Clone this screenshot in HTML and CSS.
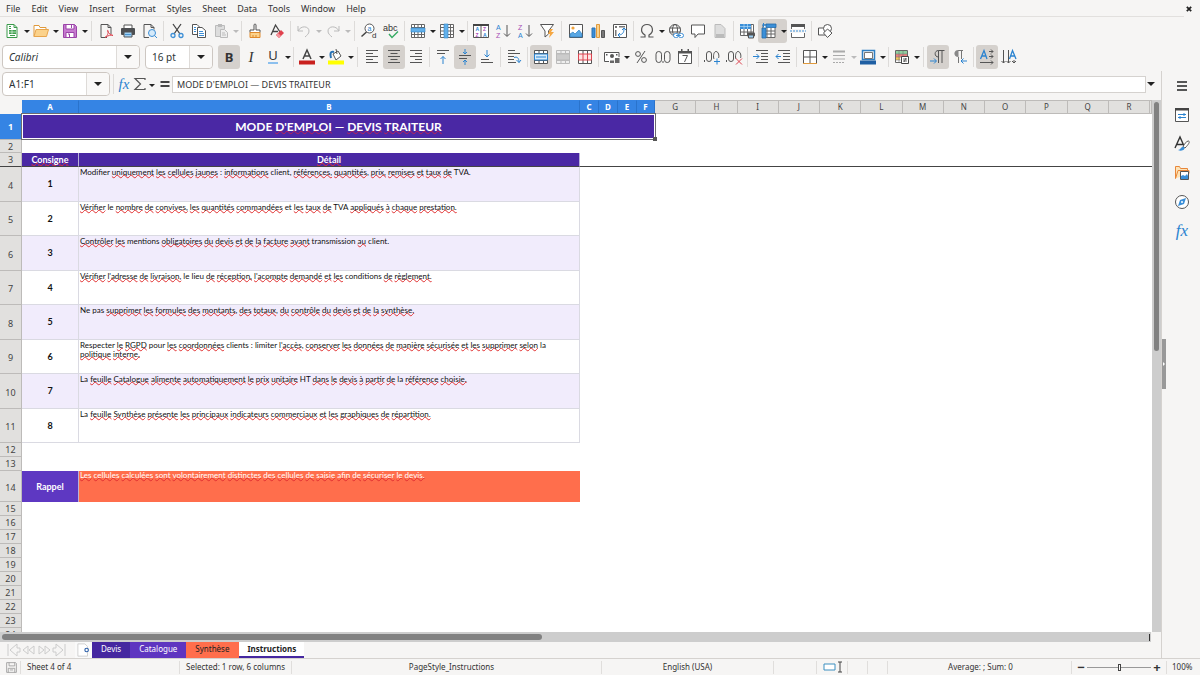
FILE: index.html
```html
<!DOCTYPE html>
<html lang="fr">
<head>
<meta charset="utf-8">
<title>Devis traiteur</title>
<link rel="stylesheet" href="styles.css">
</head>
<body>
<nav class="menu">
<button>File</button><button>Edit</button><button>View</button><button>Insert</button><button>Format</button><button>Styles</button><button>Sheet</button><button>Data</button><button>Tools</button><button>Window</button><button>Help</button>
<button class="close" aria-label="Close"><svg viewBox="0 0 16 16"><path d="M5.500 5.500l5 5m0-5l-5 5" stroke="#222" stroke-width="2"/></svg></button>
</nav>

<div class="bar">
<button class="tb" aria-label="New"><svg viewBox="0 0 16 16"><path d="M3 1.500h7l3 3v10H3z" fill="#fff" stroke="#3a9a4a"/><path d="M10 1.500v3h3M5 5.500h2M5 3.500h2" stroke="#3a9a4a" fill="none"/><path d="M5 7h7v4H5z" fill="#3fa14e"/><path d="M5 9h7M8 7v4" stroke="#fff" stroke-width=".6"/><path d="M6 12.500h5" stroke="#3a9a4a"/></svg></button><button class="arr" aria-label="New options"></button>
<button class="tb" aria-label="Open"><svg viewBox="0 0 16 16"><path d="M1 13.500V2.500h5l1 2h6v2.500" fill="#fff" stroke="#e09a3c"/><path d="M1 13.500L3 6.500h12.500l-2 7z" fill="#fbd28b" stroke="#e8a54c"/></svg></button><button class="arr" aria-label="Open options"></button>
<button class="tb" aria-label="Save"><svg viewBox="0 0 16 16"><path d="M1.500 1.500h11l2 2v11h-13z" fill="#c77bd0" stroke="#9b45a8"/><path d="M4 1.500h8v4.500H4zM4 9.500h8v5H4z" fill="#fff" stroke="#9b45a8"/><path d="M9.500 2v3M6 11h1.500v3" stroke="#9b45a8" fill="none"/></svg></button><button class="arr" aria-label="Save options"></button>
<i class="sep wide"></i>
<button class="tb" aria-label="Export PDF"><svg viewBox="0 0 16 16"><path d="M3 1.500h7l3 3V11M9 14.500H3v-13" fill="none" stroke="#555"/><path d="M10 1.500v3h3" fill="none" stroke="#555"/><path d="M7 14.500c2-1 4-5 3-7-1-1-1 3 5 5-2-1-5 0-8 2z" fill="none" stroke="#dd4450"/></svg></button>
<button class="tb" aria-label="Print"><svg viewBox="0 0 16 16"><path d="M4 5V2h8v3" fill="#fff" stroke="#555"/><rect x="1" y="5" width="14" height="7" rx="1" fill="#4d4f52"/><path d="M4 9h8v5H4z" fill="#9ed0f5" stroke="#555"/><path d="M5 11.500h6" stroke="#4a94d0"/></svg></button>
<button class="tb" aria-label="Print preview"><svg viewBox="0 0 16 16"><path d="M2 1.500h7l3 3v2M2 1.500v13h5" fill="none" stroke="#555"/><path d="M9 1.500v3h3" fill="none" stroke="#555"/><circle cx="10" cy="10" r="3.500" fill="#d5eafa" stroke="#3d8fd6"/><path d="M12.500 12.500l2.500 2.500" stroke="#3d8fd6"/></svg></button>
<i class="sep"></i>
<button class="tb" aria-label="Cut"><svg viewBox="0 0 16 16"><path d="M4 1l7 10M12 1L5 11" stroke="#444" stroke-width="1.300"/><circle cx="4" cy="12.500" r="2" fill="none" stroke="#3d8fd6" stroke-width="1.300"/><circle cx="12" cy="12.500" r="2" fill="none" stroke="#3d8fd6" stroke-width="1.300"/></svg></button>
<button class="tb" aria-label="Copy"><svg viewBox="0 0 16 16"><path d="M6 11.500H1.500v-10H6l3 3" fill="#fff" stroke="#555"/><path d="M6.500 4.500H11l3.500 3v7h-8z" fill="#fff" stroke="#555"/><path d="M3 4.500h2M3 6.500h2M3 8.500h2M8 8.500h4M8 10.500h5M8 12.500h5" stroke="#3d8fd6"/></svg></button>
<button class="tb" aria-label="Paste" disabled><svg viewBox="0 0 16 16"><path d="M7 13.500H2.500v-11h9V6" fill="#ddd" stroke="#bbb"/><path d="M5 1h4v3H5z" fill="#bbb"/><path d="M7.500 6.500h4l3 3v5h-7z" fill="#eee" stroke="#bbb"/><path d="M9 10h3M9 12h4" stroke="#bbb"/></svg></button><button class="arr off" aria-label="Paste options" disabled></button>
<i class="sep"></i>
<button class="tb" aria-label="Clone formatting"><svg viewBox="0 0 16 16"><path d="M7 7V2c0-1.300 2-1.300 2 0v5h4v2.500H3V7z" fill="#fff" stroke="#555"/><path d="M3 9.500v5h10v-5z" fill="#fbd28b" stroke="#e08a2c"/><path d="M6 14v-2M9 14v-2" stroke="#e08a2c"/></svg></button>
<button class="tb" aria-label="Clear formatting"><svg viewBox="0 0 16 16"><path d="M2 12L6.500 2 11 9M3.500 8.500H9" fill="none" stroke="#444" stroke-width="1.300"/><path d="M7 12l5-5 3 3-5 5z" fill="#e0414d"/><path d="M7 12l2-2 3 3-2 2z" fill="#f3949b"/></svg></button>
<i class="sep"></i>
<button class="tb" aria-label="Undo" disabled><svg viewBox="0 0 16 16"><path d="M2 3v5h5M2 8c3-6 11-5 11 0 0 3-2 4-4 6" fill="none" stroke="#bbb"/></svg></button><button class="arr off" aria-label="Undo history" disabled></button>
<button class="tb" aria-label="Redo" disabled><svg viewBox="0 0 16 16"><path d="M14 3v5H9M14 8C11 2 3 3 3 8c0 3 2 4 4 6" fill="none" stroke="#bbb"/></svg></button><button class="arr off" aria-label="Redo history" disabled></button>
<i class="sep wide"></i>
<button class="tb" aria-label="Find and replace"><svg viewBox="0 0 16 16"><circle cx="8.500" cy="5.500" r="4.500" fill="#fff" stroke="#555"/><path d="M5.500 9l-5 4.500" stroke="#444" stroke-width="1.500"/><text class="ic" x="6.500" y="8" font-size="7" fill="#2a83d0">a</text><text class="ic" x="11" y="15" font-size="8" fill="#333">d</text></svg></button>
<button class="tb" aria-label="Spelling"><svg viewBox="0 0 16 16"><text class="ic" x="0" y="8" font-size="9" fill="#333">abc</text><path d="M6 11l3 3.500 6-6" fill="none" stroke="#35ab63" stroke-width="1.400"/></svg></button>
<i class="sep"></i>
<button class="tb" aria-label="Row"><svg viewBox="0 0 16 16"><path d="M1.500 1.500h13v13h-13zM1.500 4.500h13M1.500 11.500h13M4.500 1.500v13M8 1.500v13M11.500 1.500v13" fill="#fff" stroke="#666"/><path d="M1 5h14v4H1z" fill="#62b0ea" stroke="#3183c8" stroke-width=".6"/></svg></button><button class="arr" aria-label="Row options"></button>
<button class="tb" aria-label="Column"><svg viewBox="0 0 16 16"><path d="M1.500 1.500h13v13h-13zM1.500 4.500h13M1.500 8h13M1.500 11.500h13M11.500 1.500v13" fill="#fff" stroke="#666"/><path d="M5 1h4v14H5z" fill="#62b0ea" stroke="#3183c8" stroke-width=".6"/></svg></button><button class="arr" aria-label="Column options"></button>
<i class="sep"></i>
<button class="tb" aria-label="Sort"><svg viewBox="0 0 16 16"><path d="M.5 1.500h15v13H.5zM8 3v12" fill="#fff" stroke="#555"/><path d="M0 1h16v2H0z" fill="#444"/><g class="ic" font-size="5" font-weight="700"><text x="2.500" y="8" fill="#2a83d0">A</text><text x="2.500" y="14" fill="#a64bb5">Z</text><text x="10" y="8" fill="#a64bb5">Z</text><text x="10" y="14" fill="#2a83d0">A</text></g></svg></button>
<button class="tb" aria-label="Sort ascending"><svg viewBox="0 0 16 16"><g class="ic" font-size="7"><text x="1" y="7" fill="#2a83d0">A</text><text x="1" y="15" fill="#a64bb5">Z</text></g><path d="M12 2v11M9 10.500l3 3 3-3" fill="none" stroke="#555"/></svg></button>
<button class="tb" aria-label="Sort descending"><svg viewBox="0 0 16 16"><g class="ic" font-size="7"><text x="1" y="7" fill="#a64bb5">Z</text><text x="1" y="15" fill="#2a83d0">A</text></g><path d="M12 2v11M9 10.500l3 3 3-3" fill="none" stroke="#555"/></svg></button>
<button class="tb" aria-label="AutoFilter"><svg viewBox="0 0 16 16"><path d="M1.500 1.500h13L9.500 8v3L6 14V8z" fill="#fff" stroke="#555"/><path d="M11 6l-2 5h2l-1 4 5-6h-3l2-3z" fill="#f5a742"/></svg></button>
<i class="sep wide"></i>
<button class="tb" aria-label="Image"><svg viewBox="0 0 16 16"><path d="M1.500 1.500h13v13h-13z" fill="#fff" stroke="#555"/><circle cx="5" cy="5" r="1.600" fill="#f0a33c"/><path d="M2 14v-3l3-2 2 2 4-4 3 4v3z" fill="#58a7e4" stroke="#2f7fc2" stroke-width=".7"/></svg></button>
<button class="tb" aria-label="Chart"><svg viewBox="0 0 16 16"><path d="M2 5h3v9.500H2z" fill="#3b8fd8" stroke="#2a73b5"/><path d="M6.500 1.500h3v13h-3z" fill="#fbd28b" stroke="#e09a3c"/><path d="M11.500 7.500h3v7h-3z" fill="#777" stroke="#555"/></svg></button>
<button class="tb" aria-label="Pivot table"><svg viewBox="0 0 16 16"><path d="M1.500 1.500h13v13h-13z" fill="#fff" stroke="#555"/><path d="M3 3h2v2H3zM7 3h6v1.500H7zM3 7h1.500v6H3z" fill="#777"/><path d="M6 12c4 0 6-2 6-6M10 7l2-2 2 2M8 10l-2 2 2 2" fill="none" stroke="#2a83d0"/></svg></button>
<i class="sep"></i>
<button class="tb" aria-label="Special character"><svg viewBox="0 0 16 16"><path d="M1.500 14H6v-2C.5 9 2 1.500 8 1.500S15.500 9 10 12v2h4.500" fill="none" stroke="#555" stroke-width="1.200"/></svg></button><button class="arr" aria-label="Special character options"></button>
<button class="tb" aria-label="Hyperlink"><svg viewBox="0 0 16 16"><circle cx="7" cy="7" r="5.500" fill="#fff" stroke="#555"/><ellipse cx="7" cy="7" rx="2.500" ry="5.500" fill="none" stroke="#555"/><path d="M1.500 5h11M1.500 9h11" stroke="#555"/><rect x="5.500" y="10.500" width="5" height="4" rx="2" fill="#fff" stroke="#3d8fd6"/><rect x="10.500" y="10.500" width="5" height="4" rx="2" fill="#fff" stroke="#3d8fd6"/><path d="M8 12.500h5" stroke="#3d8fd6"/></svg></button>
<button class="tb" aria-label="Comment"><svg viewBox="0 0 16 16"><path d="M1.500 2h13v9H8l-3 3.500V11H1.500z" fill="#fff" stroke="#555"/></svg></button>
<button class="tb" aria-label="Headers and footers" disabled><svg viewBox="0 0 16 16"><path d="M3 1.500h6l4 4v9H3z" fill="#ddd" stroke="#bbb"/><path d="M4 11h8v3H4z" fill="#bbb"/></svg></button>
<i class="sep"></i>
<button class="tb" aria-label="Print area"><svg viewBox="0 0 16 16"><path d="M1.500 1.500h13v11h-13zM1.500 9h13M5 1.500v11M8.500 1.500v11M12 1.500v11" fill="#fff" stroke="#666"/><path d="M1 1h11v5H1z" fill="#3b8fd8"/><path d="M1 3.500h11M5 1v5M8.500 1v5" stroke="#bfe0fa" stroke-width=".6"/><rect x="8" y="9.500" width="8" height="4" rx="1" fill="#555"/><path d="M9.500 12h5v3h-5z" fill="#9ed0f5" stroke="#555"/></svg></button>
<span class="split on"><button class="tb" aria-label="Freeze"><svg viewBox="0 0 16 16"><path d="M2 2h12v12.500H2zM6 5v10M10 5v10M2 8h12M2 11h12" fill="#fff" stroke="#666"/><path d="M5 1h10v3.500H5zM1 5h4v10H1z" fill="#3b8fd8" stroke="#2369a8" stroke-width=".8"/><path d="M2.500 0v4M1 2h4" stroke="#2a83d0"/></svg></button><button class="arr" aria-label="Freeze options"></button></span>
<button class="tb" aria-label="Split window"><svg viewBox="0 0 16 16"><path d="M1.500 6V1.500h13V6M1.500 10v4.500h13V10" fill="#fff" stroke="#666"/><path d="M1 1h14v3H1z" fill="#555"/><path d="M0 8h16" stroke="#3d8fd6" stroke-dasharray="2 1"/></svg></button>
<i class="sep"></i>
<button class="tb" aria-label="Draw functions"><svg viewBox="0 0 16 16"><path d="M1.500 5h7v7h-7z" fill="#fff" stroke="#555"/><circle cx="10.500" cy="5.500" r="4" fill="#fff" stroke="#555"/><path d="M10.500 6l4.500 4-4.500 4.500L6.500 10z" fill="#fff" stroke="#555"/></svg></button>
</div>

<div class="bar second">
<div class="combo font"><input type="text" value="Calibri" aria-label="Font name"><button aria-label="Font list"></button></div>
<div class="combo size"><input type="text" value="16 pt" aria-label="Font size"><button aria-label="Size list"></button></div>
<button class="tb on glyph b" aria-label="Bold">B</button>
<button class="tb glyph it" aria-label="Italic">I</button>
<button class="tb glyph un" aria-label="Underline"><span>U</span></button><button class="arr" aria-label="Underline options"></button>
<i class="sep"></i>
<button class="tb" aria-label="Font colour"><svg viewBox="0 0 16 16"><path d="M4 10L8 1l4 9M5.500 7h5" fill="none" stroke="#444" stroke-width="1.500"/><path d="M0 11.500h16v4H0z" fill="#c9211e"/></svg></button><button class="arr" aria-label="Font colours"></button>
<button class="tb" aria-label="Highlight colour"><svg viewBox="0 0 16 16"><path d="M5 5l5-3 3 5-5 4z" fill="#fff" stroke="#555"/><path d="M8 0l1 5" stroke="#555"/><path d="M6 3C2 2 2 5 3 9" fill="none" stroke="#2a73b5" stroke-width="2"/><path d="M0 11.500h16v4H0z" fill="#ffff00"/></svg></button><button class="arr" aria-label="Highlight colours"></button>
<i class="sep wide"></i>
<button class="tb" aria-label="Align left"><svg viewBox="0 0 16 16"><path d="M2 1.500h12M2 4.500h7M2 7.500h12M2 10.500h7M2 13.500h12" stroke="#555"/></svg></button>
<button class="tb on" aria-label="Align centre"><svg viewBox="0 0 16 16"><path d="M2 1.500h12M4.500 4.500h7M2 7.500h12M4.500 10.500h7M2 13.500h12" stroke="#555"/></svg></button>
<button class="tb" aria-label="Align right"><svg viewBox="0 0 16 16"><path d="M2 1.500h12M7 4.500h7M2 7.500h12M7 10.500h7M2 13.500h12" stroke="#555"/></svg></button>
<i class="sep"></i>
<button class="tb" aria-label="Align top"><svg viewBox="0 0 16 16"><path d="M2 1.500h12M2 4.500h8" stroke="#555"/><path d="M8 15V7.500M5.500 10L8 7.500l2.500 2.500" fill="none" stroke="#2a83d0"/></svg></button>
<button class="tb on" aria-label="Centre vertically"><svg viewBox="0 0 16 16"><path d="M2 6.500h12M2 9.500h8" stroke="#555"/><path d="M8 0v5M6 3l2 2 2-2M8 16v-5M6 13l2-2 2 2" fill="none" stroke="#2a83d0"/></svg></button>
<button class="tb" aria-label="Align bottom"><svg viewBox="0 0 16 16"><path d="M2 10.500h8M2 13.500h12" stroke="#555"/><path d="M8 1v7M5.500 5.500L8 8l2.500-2.500" fill="none" stroke="#2a83d0"/></svg></button>
<i class="sep"></i>
<button class="tb" aria-label="Wrap text"><svg viewBox="0 0 16 16"><path d="M2 1.500h7M2 4.500h12M2 7.500h6M2 10.500h6M2 13.500h8" stroke="#555"/><path d="M8 8.500c3-1 5 0 5 5M10.500 11l2.500 2.500 2-2.500" fill="none" stroke="#2a83d0"/></svg></button>
<i class="sep"></i>
<button class="tb on" aria-label="Merge and centre"><svg viewBox="0 0 16 16"><path d="M1.500 1.500h13v13h-13zM6 1.500v13M10.500 1.500v13M1.500 4.500h13M1.500 11.500h13" fill="#fff" stroke="#555"/><path d="M1.500 5h13v6h-13z" fill="#d6ebfb" stroke="#2a83d0"/><path d="M3 8h10" stroke="#2a83d0"/></svg></button>
<button class="tb" aria-label="Merge cells" disabled><svg viewBox="0 0 16 16"><path d="M1.500 1.500h13v13h-13zM6 1.500v13M10.500 1.500v13M1.500 4.500h13M1.500 11.500h13" fill="#eee" stroke="#bbb"/><path d="M1.500 5h13v6h-13z" fill="#ccc" stroke="#bbb"/></svg></button>
<button class="tb" aria-label="Unmerge cells"><svg viewBox="0 0 16 16"><path d="M1.500 1.500h13v13h-13zM6 1.500v13M10.500 1.500v13" fill="#fff" stroke="#555"/><path d="M1.500 5h13v6h-13zM6 5v6M10.500 5v6" fill="#fde3e3" stroke="#dd4450"/></svg></button>
<i class="sep"></i>
<button class="tb" aria-label="Currency"><svg viewBox="0 0 16 16"><path d="M15 8V3.500H.5v9H5" fill="#fff" stroke="#555"/><circle cx="8" cy="7" r="2" fill="#555"/><path d="M2 5h1.500v1.500H2zM12 5h1.500v1.500H12z" fill="#555"/><path d="M6 11.500h4v2.500H6zM11 9h4.500v5H11z" fill="#666"/></svg></button><button class="arr" aria-label="Currency options"></button>
<button class="tb" aria-label="Percent"><svg viewBox="0 0 16 16"><circle cx="5" cy="5" r="2.400" fill="none" stroke="#555"/><circle cx="11" cy="11" r="2.400" fill="none" stroke="#555"/><path d="M12 2L4 14" stroke="#555"/></svg></button>
<button class="tb" aria-label="Number"><svg viewBox="0 0 16 16"><rect x="1" y="2.500" width="5.500" height="11" rx="2.700" fill="none" stroke="#555"/><rect x="9.500" y="2.500" width="5.500" height="11" rx="2.700" fill="none" stroke="#555"/><path d="M8 12v2" stroke="#555"/></svg></button>
<button class="tb" aria-label="Date"><svg viewBox="0 0 16 16"><path d="M1.500 2.500h13v12h-13z" fill="#fff" stroke="#555"/><path d="M1 2h14v2.500H1zM4 0h1.500v3H4zM10.500 0H12v3h-1.500z" fill="#555"/><path d="M5.500 6.500h5l-3 6.500" fill="none" stroke="#555"/></svg></button>
<i class="sep"></i>
<button class="tb" aria-label="Add decimal place"><svg viewBox="0 0 16 16"><rect x="2.500" y="2.500" width="5" height="10" rx="2.500" fill="none" stroke="#555"/><path d="M10 10c-1-2-.5-7.500 2-7.500S15.500 7 14.500 9M.5 11v2" fill="none" stroke="#555"/><path d="M13 9.500v6M10 12.500h6" stroke="#2a83d0"/></svg></button>
<button class="tb" aria-label="Delete decimal place"><svg viewBox="0 0 16 16"><rect x="2.500" y="2.500" width="5" height="10" rx="2.500" fill="none" stroke="#555"/><path d="M10 10c-1-2-.5-7.500 2-7.500S15.500 7 14.500 9M.5 11v2" fill="none" stroke="#555"/><path d="M10 9.500l6 6M16 9.500l-6 6" stroke="#dd4450"/></svg></button>
<i class="sep"></i>
<button class="tb" aria-label="Increase indent"><svg viewBox="0 0 16 16"><path d="M3 1.500h12M8 4.500h7M8 7.500h7M8 10.500h7M3 13.500h12" stroke="#555"/><path d="M0 7.500h6M3.500 5L6 7.500 3.500 10" fill="none" stroke="#2a83d0"/></svg></button>
<button class="tb" aria-label="Decrease indent"><svg viewBox="0 0 16 16"><path d="M3 1.500h12M8 4.500h7M8 7.500h7M8 10.500h7M3 13.500h12" stroke="#555"/><path d="M6 7.500H1M3.500 5L1 7.500 3.500 10" fill="none" stroke="#2a83d0"/></svg></button>
<i class="sep"></i>
<button class="tb" aria-label="Borders"><svg viewBox="0 0 16 16"><path d="M1.500 1.500h13v13h-13z" fill="#fff" stroke="#555"/><path d="M8 2v12M2 8h12" stroke="#555"/><path d="M1 14.500h14" stroke="#e09a3c"/></svg></button><button class="arr" aria-label="Border options"></button>
<button class="tb" aria-label="Border style" disabled><svg viewBox="0 0 16 16"><path d="M2 2.500h12" stroke="#aaa" stroke-width="2"/><path d="M2 6.500h12M2 10h12" stroke="#aaa"/><path d="M2 13.500h12" stroke="#aaa" stroke-dasharray="2 1"/></svg></button><button class="arr off" aria-label="Border styles" disabled></button>
<button class="tb" aria-label="Border colour"><svg viewBox="0 0 16 16"><path d="M2.500 1.500h12v9h-12z" fill="#f6f5f4" stroke="#2f7fc2" stroke-width="1.500"/><path d="M4.500 3.500h8v6h-8z" fill="#fff" stroke="#777"/><path d="M0 11.500h16v4H0z" fill="#1f5fa3"/></svg></button><button class="arr" aria-label="Border colours"></button>
<i class="sep"></i>
<button class="tb" aria-label="Conditional formatting"><svg viewBox="0 0 16 16"><path d="M1.500 1.500h12v12h-12z" fill="#fff" stroke="#666"/><path d="M2 2h11v3H2z" fill="#8fd19e"/><path d="M2 5h11v3H2z" fill="#ee7f7f"/><path d="M2 8h4v3H2z" fill="#f6c95c"/><path d="M1.500 5h12M1.500 8h12M1.500 11h5M5 2v11M9 2v5" stroke="#777" stroke-width=".6"/><path d="M7.500 7.500h7v7h-7z" fill="#fff" stroke="#444"/><path d="M9 10h4M9 12h4M12 9l-2 4" stroke="#444" stroke-width=".8"/></svg></button><button class="arr" aria-label="Conditional options"></button>
<i class="sep wide"></i>
<button class="tb on" aria-label="Left to right"><svg viewBox="0 0 16 16"><path d="M8.500 9V1.500h6M12 1.500V14M8.500 9V14M8.500 1.500C4 1.500 4 8 8.500 8" fill="none" stroke="#555"/><path d="M0 12h6M4 9.500L6.500 12 4 14.500" fill="none" stroke="#2a83d0"/></svg></button>
<button class="tb" aria-label="Right to left"><svg viewBox="0 0 16 16"><path d="M6 1.500h5M9.500 1.500V10M6.500 8v6" fill="none" stroke="#777"/><path d="M6.500 1C1 1 1 8 6.500 8z" fill="#888"/><path d="M15 12H9M11.500 9.500L9 12l2.500 2.500" fill="none" stroke="#2a83d0"/></svg></button>
<i class="sep"></i>
<button class="tb on" aria-label="Text horizontal"><svg viewBox="0 0 16 16"><path d="M1.500 10L5 1.500 8 10M2.500 7H7" fill="none" stroke="#2a83d0" stroke-width="1.300"/><path d="M10 2.500h4M10 7.500h4M1 13.500h13M12 .5l2 2-2 2M12 5.500l2 2-2 2M12 11.500l2 2-2 2" fill="none" stroke="#555"/></svg></button>
<button class="tb" aria-label="Text vertical"><svg viewBox="0 0 16 16"><path d="M8.500 10L11.500 1.500l3.500 8.500M10 7h4" fill="none" stroke="#2a83d0" stroke-width="1.300"/><path d="M2.500 1v13M7.500 1v13M13 11v3M.5 12l2 2 2-2M5.500 12l2 2 2-2M11 12l2 2 2-2" fill="none" stroke="#555"/></svg></button>
</div>

<main class="work">
<section class="doc">
<div class="fbar">
<div class="combo name"><input type="text" value="A1:F1" aria-label="Name box"><button aria-label="Named ranges"></button></div>
<i class="sep"></i>
<button class="fx" aria-label="Function wizard"><i>fx</i></button>
<button class="fs" aria-label="Select function"><svg viewBox="0 0 16 16"><path d="M13 4V2.500H3L8.500 8 3 13.500h10V12" fill="none" stroke="#555" stroke-width="1.200"/></svg></button><button class="arr" aria-label="Functions"></button>
<button class="fs" aria-label="Formula"><svg viewBox="0 0 16 16"><path d="M3.500 6h9M3.500 10h9" stroke="#444" stroke-width="1.800"/></svg></button>
<input class="formula" type="text" value="MODE D'EMPLOI — DEVIS TRAITEUR" aria-label="Formula input">
<button class="expand" aria-label="Expand formula bar"></button>
</div>

<div class="view">
<div class="sheet">
<table>
<colgroup><col class="ch"><col class="ca"><col class="cb"><col class="cs"><col class="cs"><col class="cs"><col class="cf"><col><col><col><col><col><col><col><col><col><col><col><col><col class="ce"></colgroup>
<thead><tr><td class="corner"></td><th class="sel">A</th><th class="sel">B</th><th class="sel">C</th><th class="sel">D</th><th class="sel">E</th><th class="sel">F</th><th>G</th><th>H</th><th>I</th><th>J</th><th>K</th><th>L</th><th>M</th><th>N</th><th>O</th><th>P</th><th>Q</th><th>R</th><th></th></tr></thead>
<tbody>
<tr class="r1"><th class="sel">1</th><td class="title" colspan="6">MODE <u>D'EMPLOI</u> — <u>DEVIS</u> <u>TRAITEUR</u><span class="frame"></span></td><td colspan="13"></td></tr>
<tr class="r2"><th>2</th><td colspan="19"></td></tr>
<tr class="r3"><th>3</th><td class="head"><u>Consigne</u></td><td class="head"><u>Détail</u></td><td colspan="17"></td></tr>
<tr class="odd"><th>4</th><td class="num">1</td><td class="txt">Modifier <u>uniquement</u> <u>les</u> <u>cellules</u> <u>jaunes</u> : <u>informations</u> client, <u>références,</u> <u>quantités</u>, <u>prix,</u> <u>remises</u> <u>et</u> <u>taux</u> <u>de</u> TVA.</td><td colspan="17"></td></tr>
<tr class="even"><th>5</th><td class="num">2</td><td class="txt"><u>Vérifier</u> le <u>nombre</u> <u>de</u> <u>convives,</u> <u>les</u> <u>quantités</u> <u>commandées</u> et <u>les</u> <u>taux</u> <u>de</u> TVA <u>appliqués</u> <u>à</u> <u>chaque</u> <u>prestation.</u></td><td colspan="17"></td></tr>
<tr class="odd"><th>6</th><td class="num">3</td><td class="txt"><u>Contrôler</u> <u>les</u> mentions <u>obligatoires</u> <u>du</u> <u>devis</u> <u>et</u> <u>de</u> <u>la</u> <u>facture</u> <u>avant</u> transmission <u>au</u> client.</td><td colspan="17"></td></tr>
<tr class="even"><th>7</th><td class="num">4</td><td class="txt"><u>Vérifier</u> <u>l'adresse</u> <u>de</u> <u>livraison,</u> le lieu <u>de</u> <u>réception,</u> <u>l'acompte</u> <u>demandé</u> <u>et</u> <u>les</u> conditions <u>de</u> <u>règlement.</u></td><td colspan="17"></td></tr>
<tr class="odd"><th>8</th><td class="num">5</td><td class="txt">Ne pas <u>supprimer</u> <u>les</u> <u>formules</u> <u>des</u> <u>montants</u>, <u>des</u> <u>totaux</u>, <u>du</u> <u>contrôle</u> <u>du</u> <u>devis</u> <u>et</u> <u>de</u> <u>la</u> <u>synthèse.</u></td><td colspan="17"></td></tr>
<tr class="even"><th>9</th><td class="num">6</td><td class="txt">Respecter <u>le</u> <u>RGPD</u> pour <u>les</u> <u>coordonnées</u> clients : limiter <u>l'accès</u>, <u>conserver</u> <u>les</u> <u>données</u> <u>de</u> <u>manière</u> <u>sécurisée</u> <u>et</u> <u>les</u> <u>supprimer</u> <u>selon</u> la <br><u>politique</u> <u>interne.</u></td><td colspan="17"></td></tr>
<tr class="odd"><th>10</th><td class="num">7</td><td class="txt">La <u>feuille</u> <u>Catalogue</u> <u>alimente</u> <u>automatiquement</u> <u>le</u> <u>prix</u> <u>unitaire</u> HT <u>dans</u> <u>le</u> <u>devis</u> <u>à</u> <u>partir</u> <u>de</u> la <u>référence</u> <u>choisie.</u></td><td colspan="17"></td></tr>
<tr class="even"><th>11</th><td class="num">8</td><td class="txt">La <u>feuille</u> <u>Synthèse</u> <u>présente</u> <u>les</u> <u>principaux</u> <u>indicateurs</u> <u>commerciaux</u> <u>et</u> <u>les</u> <u>graphiques</u> <u>de</u> <u>répartition.</u></td><td colspan="17"></td></tr>
<tr><th>12</th><td colspan="19"></td></tr>
<tr><th>13</th><td colspan="19"></td></tr>
<tr class="r14"><th>14</th><td class="rappel">Rappel</td><td class="txt warn"><u>Les</u> <u>cellules</u> <u>calculées</u> <u>sont</u> <u>volontairement</u> <u>distinctes</u> <u>des</u> <u>cellules</u> <u>de</u> <u>saisie</u> <u>afin</u> <u>de</u> <u>sécuriser</u> <u>le</u> <u>devis.</u></td><td colspan="17"></td></tr>
<tr><th>15</th><td colspan="19"></td></tr>
<tr><th>16</th><td colspan="19"></td></tr>
<tr><th>17</th><td colspan="19"></td></tr>
<tr><th>18</th><td colspan="19"></td></tr>
<tr><th>19</th><td colspan="19"></td></tr>
<tr><th>20</th><td colspan="19"></td></tr>
<tr><th>21</th><td colspan="19"></td></tr>
<tr><th>22</th><td colspan="19"></td></tr>
<tr><th>23</th><td colspan="19"></td></tr>
<tr><th>24</th><td colspan="19"></td></tr>
</tbody>
</table>
</div>
<div class="vscroll"><div></div></div>
</div>
<div class="hscroll"><div class="track"><div class="thumb"></div><i></i></div></div>

<div class="tabs">
<div class="tabnav">
<button aria-label="First sheet"><svg viewBox="0 0 16 16"><path d="M2 2v12M4 8l7-6v4h3v4h-3v4z"/></svg></button><button aria-label="Previous sheet"><svg viewBox="0 0 16 16"><path d="M2 8l5-4v8zM8 8l5-4v8z"/></svg></button><button aria-label="Next sheet"><svg viewBox="0 0 16 16"><path d="M3 4l5 4-5 4zM9 4l5 4-5 4z"/></svg></button><button aria-label="Last sheet"><svg viewBox="0 0 16 16"><path d="M14 2v12M12 8L5 2v4H2v4h3v4z"/></svg></button>
</div>
<button class="add" aria-label="Add sheet"><svg viewBox="0 0 16 16"><path d="M1 1h8l3 3v11H1z" fill="#fff" stroke="#ccc"/><circle cx="11" cy="8" r="2" fill="#fff" stroke="#2a5ea8" stroke-width="1.300"/></svg></button>
<button class="tab devis">Devis</button><button class="tab cat">Catalogue</button><button class="tab syn">Synthèse</button><button class="tab cur">Instructions</button>
</div>
</section>

<aside class="side">
<button class="grab" aria-label="Hide sidebar"></button>
<button aria-label="Sidebar settings"><svg viewBox="0 0 16 16"><path d="M3 4h10M3 8h10M3 12h10" stroke="#222" stroke-width="1.300"/></svg></button>
<button aria-label="Properties"><svg viewBox="0 0 16 16"><path d="M1.500 2h13v12.500h-13z" fill="#fff" stroke="#555"/><path d="M1 1h14v2.500H1z" fill="#444"/><path d="M4 7.500h8M4 10.500h8M10 6v3M6 9v3" stroke="#2a83d0"/></svg></button>
<button aria-label="Styles"><svg viewBox="0 0 16 16"><path d="M1 12L6 1l4 9M2.500 8.500H9" fill="none" stroke="#333" stroke-width="1.400"/><path d="M14 5c2 0 2 2-3 7l-2-1c1-3 3-5 5-6z" fill="#fff" stroke="#555"/><path d="M4 14c3 0 3-4 6-3 2 2-2 5-6 3z" fill="#3b8fd8"/></svg></button>
<button aria-label="Gallery"><svg viewBox="0 0 16 16"><path d="M1.500 13.500v-12h4l1 2h7v2M1.500 13.500L4 5.500h11v3" fill="#fde3b8" stroke="#e8873a"/><path d="M6.500 6.500h8v8h-8z" fill="#fff" stroke="#555"/><path d="M7 14v-3l2-1 2 1 2-2 1 2v3z" fill="#3b8fd8"/></svg></button>
<button aria-label="Navigator"><svg viewBox="0 0 16 16"><circle cx="8" cy="8" r="6.500" fill="#fff" stroke="#555"/><path d="M12 4l-2 6-6 2 2-6z" fill="#3b8fd8"/><circle cx="8" cy="8" r="1" fill="#fff"/></svg></button>
<button class="fx" aria-label="Functions"><i>fx</i></button>
</aside>
</main>

<footer class="status">
<span class="s0"><svg viewBox="0 0 16 16"><path d="M2 2h11l1 1v11H2zM5 2v4h7V2M4 14V9h8v5M6 11h4" fill="none" stroke="#999"/></svg></span>
<span class="s1">Sheet 4 of 4</span>
<span class="s2">Selected: 1 row, 6 columns</span>
<span class="s3">PageStyle_Instructions</span>
<span class="s4">English (USA)</span>
<span class="s5"></span>
<span class="s6"><svg class="mode" viewBox="0 0 20 12"><path d="M1 3h11v6H1z" fill="#fff" stroke="#3d8fc0"/><path d="M15 1h4M15 11h4M17 1v10" stroke="#444"/></svg></span>
<span class="s7"></span><span class="s7"></span>
<span class="s8">Average: ; Sum: 0</span>
<span class="s9"><button aria-label="Zoom out">−</button><input type="range" min="0" max="100" value="50" aria-label="Zoom"><button aria-label="Zoom in">+</button></span>
<span class="s10">100%</span>
</footer>
</body>
</html>
```
FILE: styles.css
```css
* { box-sizing: border-box; }
html, body { height: 100%; margin: 0; }
body {
  display: flex; flex-direction: column; overflow: hidden;
  background: #f6f5f4; color: #333;
  font: 9px/12px "Noto Sans", "Open Sans", sans-serif;
}
button, input { font: inherit; color: inherit; margin: 0; padding: 0; border: 0; background: none; }
button { display: flex; align-items: center; justify-content: center; flex: none; }
svg { width: 16px; height: 16px; display: block; flex: none; fill: none; overflow: visible; }
.ic { font-family: "Liberation Sans", sans-serif; }

.menu { display: flex; height: 17px; align-items: center; padding: 0 4px 0 6px; gap: 11px; position: relative; flex: none; }
.menu::after { content: ""; position: absolute; left: 0; right: 16px; bottom: 0; border-bottom: 1px solid #e2e0de; }
.menu .close { margin-left: auto; }
.menu .close svg { width: 14px; height: 14px; }

.bar { display: flex; align-items: center; height: 27px; padding-left: 1px; flex: none; }
.second { padding-bottom: 2px; }
.tb { width: 22px; height: 24px; border-radius: 3px; }
.on { background: #d5d1cd; border-radius: 3px; }
.split { display: flex; }
.arr { width: 7px; height: 24px; }
.arr::before { content: ""; border: 3px solid transparent; border-top-color: #222; border-bottom: 0; margin-top: 2px; }
.arr.off::before { border-top-color: #bbb; }
.sep { width: 5px; height: 20px; flex: none; background: linear-gradient(#dddbd9, #dddbd9) center / 1px 100% no-repeat; }
.sep.wide { width: 7px; }

.combo { display: flex; height: 24px; flex: none; border: 1px solid #cdc7c2; border-radius: 4px; background: #fff; font-size: 10px; color: #2e3436; }
.combo input { flex: 1; min-width: 0; padding-left: 6px; outline: 0; }
.combo button { width: 23px; border-left: 1px solid #dedbd8; background: #f9f8f7; border-radius: 0 4px 4px 0; }
.combo button::before, .expand::before { content: ""; border: 4px solid transparent; border-top-color: #222; border-bottom: 0; }
.font { width: 138px; margin: 0 5px 0 1px; }
.font input { font-style: italic; }
.size { width: 68px; margin-right: 5px; }
.glyph { font-size: 13px; }
.b { font-weight: 700; }
.it { font-family: "Liberation Serif", serif; font-style: italic; font-size: 15px; }
.un span { border-bottom: 2px solid #8cc0ee; line-height: 13px; }

.work { display: flex; flex: 1; min-height: 0; }
.doc { display: flex; flex-direction: column; flex: 1; min-width: 0; }
.fbar { display: flex; align-items: center; height: 29px; padding: 0 5px 3px 2px; flex: none; }
.name { width: 108px; margin-right: 1px; }
.fx { font: italic 15px/16px "Liberation Serif", serif; color: #2a83d0; }
.fbar .fx { width: 16px; }
.fs { width: 15px; }
.fbar .arr { width: 10px; }
.formula { flex: 1; min-width: 0; height: 17px; padding-left: 4px; border: 1px solid #d5d2cf; background: #fff; font-size: 9px; outline: 0; }
.expand { width: 10px; }

.view { display: flex; flex: 1; min-height: 0; overflow: hidden; }
.sheet { flex: 1; min-width: 0; background: #fff; overflow: hidden; }
table { width: 100%; table-layout: fixed; border-collapse: separate; border-spacing: 0; }
.ch { width: 22px; } .ca { width: 57px; } .cb { width: 501px; }
.cs { width: 19px; } .cf { width: 18px; } .ce { width: 2px; }
th, td { padding: 0; height: 14px; line-height: 12px; overflow: hidden; }
th { background: #e1e0de; color: #444; font-weight: 400; border-right: 1px solid #bdbbb9; border-bottom: 1px solid #bdbbb9; }
tbody th { padding-top: 1px; }
thead th { border-top: 1px solid #bdbbb9; font-size: 8px; }
thead .sel { border-color: #3584e4 #2a73cc #3584e4 #3584e4; }
.corner { background: #f6f5f4; }
th.sel { background: #3584e4; color: #fff; font-weight: 700; padding-top: 0; }
.r1 > * { height: 26px; }
.r2 > * { height: 13px; line-height: 11px; }
.r3 > * { border-bottom: 1px solid #444; }
.odd > * { height: 35px; }
.even > * { height: 34px; }
.r14 > * { height: 31px; }
.odd th, .even th, .r14 th { padding-top: 3px; }
u { text-decoration: underline wavy #e03030; text-decoration-thickness: 1px; text-underline-offset: -1px; text-decoration-skip-ink: none; }
.title { position: relative; overflow: visible; background: #4a28a4; color: #fff; text-align: center; font: 700 12px/16px Lato, sans-serif; padding-bottom: 1px; }
.title u { text-decoration-color: #c02050; }
.frame { position: absolute; inset: 0 0 1px 0; border: 1px solid #fff; outline: 1px solid #6b6a70; }
.frame::after { content: ""; position: absolute; right: -3px; bottom: -3px; width: 4px; height: 4px; background: #555; }
.head, .rappel { background: #4a28a4; color: #fff; text-align: center; font: 700 9px/12px Lato, sans-serif; border-right: 1px solid #b9b2d8; }
.rappel { background: #5e38c2; }
.num { text-align: center; font: 700 9px/12px Lato, sans-serif; color: #111; border-right: 1px solid #dadae2; border-bottom: 1px solid #dadae2; }
.txt { vertical-align: top; padding: 1px 0 0 1px; font: 8px/9px Lato, sans-serif; color: #111; white-space: nowrap; border-right: 1px solid #dadae2; border-bottom: 1px solid #dadae2; }
.odd .num, .odd .txt { background: #f1ecfc; }
.warn { background: #ff6e4c; color: #fff; border: 0; padding-top: 0; }

.vscroll { width: 9px; background: #cdcdcd; padding: 2px 2px 0; }
.vscroll div { height: 47%; background: #818181; border-radius: 3px; }
.hscroll { height: 10px; padding-right: 10px; flex: none; }
.track { display: flex; align-items: center; justify-content: space-between; height: 100%; background: #cdcdcd; padding: 0 1px 0 2px; }
.thumb { width: 47%; height: 6px; background: #818181; border-radius: 3px; }
.track i { width: 1px; height: 7px; background: #333; }

.tabs { display: flex; height: 16px; flex: none; font-size: 8px; }
.tabnav { display: flex; width: 75px; padding-left: 6px; }
.tabnav button { width: 15px; }
.tabnav svg { stroke: #ccc; }
.add { width: 17px; background: #fafafa; }
.add svg { width: 14px; height: 14px; }
.tab { padding: 0 9px 2px; color: #fff; }
.devis { background: #4527a0; }
.cat { background: #5e35c0; }
.syn { background: #ff6e4c; color: #222; padding-right: 10px; }
.cur { background: #fff; color: #222; font-weight: 700; border-bottom: 2px solid #4527a0; padding: 0 8px; }

.side { position: relative; width: 39px; padding-left: 2px; border-left: 1px solid #d5d2cf; display: flex; flex-direction: column; align-items: center; flex: none; }
.side button { width: 24px; height: 29px; }
.side .fx { font-size: 17px; }
.side .grab { position: absolute; left: 0; top: 268px; width: 4px; height: 50px; background: #999; }
.grab::before { content: ""; border: 2px solid transparent; border-left-color: #fff; border-right: 0; }

.status { display: flex; align-items: center; height: 17px; flex: none; border-top: 1px solid #d5d2cf; font-size: 8px; }
.status > span { display: flex; align-items: center; height: 13px; padding-left: 6px; border-right: 1px solid #e0dedc; flex: none; }
.status .s0 { width: 21px; padding-left: 5px; }
.s0 svg { width: 13px; height: 13px; }
.s1 { width: 159px; } .s2 { width: 112px; }
.status .s3 { width: 310px; justify-content: center; padding-left: 10px; }
.status .s4 { width: 172px; justify-content: center; padding-left: 0; }
.s5 { width: 43px; }
.s6 { width: 31px; }
.mode { width: 20px; height: 12px; }
.s7 { width: 20px; }
.status .s8 { flex: 1; justify-content: center; padding-left: 2px; }
.s9 { width: 95px; }
.status .s9 { padding-left: 5px; }
.s9 button { width: 8px; font-size: 13px; font-weight: 700; }
.s9 input { appearance: none; width: 64px; height: 12px; margin: 0 2px; background: linear-gradient(#999, #999) center / 100% 1px no-repeat; }
.s9 input::-webkit-slider-thumb { appearance: none; width: 3px; height: 7px; border: 1px solid #444; background: #fff; }
.status .s10 { width: 33px; border: 0; padding-left: 5px; }
```
